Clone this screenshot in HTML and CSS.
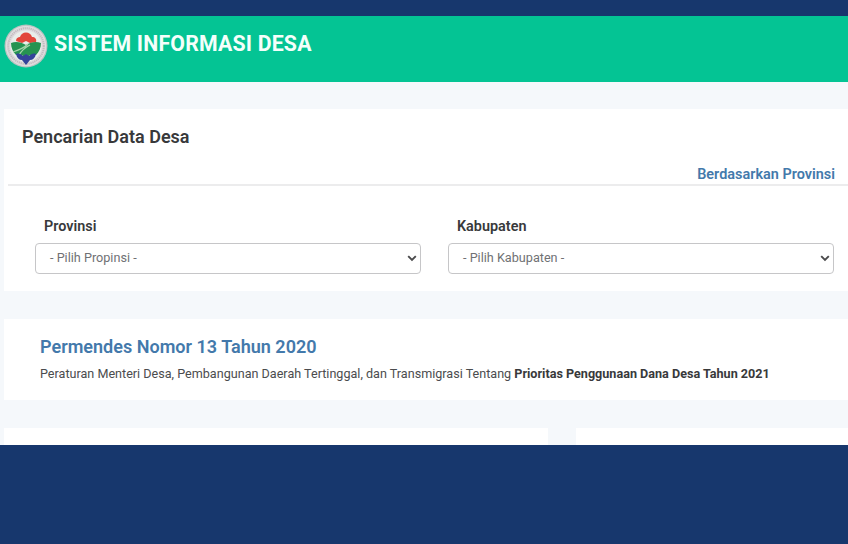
FILE: index.html
```html
<!DOCTYPE html>
<html lang="id">
<head>
<meta charset="utf-8">
<title>Sistem Informasi Desa</title>
<link rel="stylesheet" href="styles.css">
</head>
<body>
<div class="page">
  <header class="header">
    <svg class="logo" viewBox="0 0 44 44" aria-hidden="true">
      <circle cx="22" cy="22" r="21.5" fill="#b9c3c1"/>
      <circle cx="22" cy="22" r="20.300" fill="#dfdcde"/>
      <circle cx="22" cy="22" r="17.800" fill="none" stroke="#a8999f" stroke-width="2" stroke-dasharray="1.200 .8" opacity=".5"/>
      <circle cx="22" cy="22" r="15.500" fill="#e9eeea"/>
      <path d="M12 17c0-3 2-4 4-4 1-3 3-4.500 6-4.500s5 1.500 6 4.500c3 0 5 2 4 5l-6 1-4-2-4 2z" fill="#e2453a"/>
      <path d="M7 19c5-2 10-1 15 2 5-3 10-4 15-2 0 5-2 9-5 12-4-1-7 0-10 3-3-3-6-4-10-3-3-3-5-7-5-12z" fill="#269351"/>
      <path d="M9 28c6-2 11-4 15-8M15 31c3-5 7-8 11-10" fill="none" stroke="#a5d5a9" stroke-width="1.300"/>
      <path d="M12 30c3-1 5 0 7 2l3-2 3 2c2-2 4-3 7-2-1 4-3 6-6 6l-4 5-4-5c-3 0-5-2-6-6z" fill="#34439a"/>
    </svg>
    <h1 class="brand">SISTEM INFORMASI DESA</h1>
  </header>
  <main class="content">
    <section class="card search">
      <h2 class="search-title">Pencarian Data Desa</h2>
      <div class="tabs"><a class="tab">Berdasarkan Provinsi</a></div>
      <div class="fields">
        <div class="field">
          <div class="label">Provinsi</div>
          <div class="select"><span>- Pilih Propinsi -</span>
            <svg class="chevron" viewBox="0 0 10 7"><path d="M1.2 1.2 5 5l3.800-3.800"/></svg>
          </div>
        </div>
        <div class="field">
          <div class="label">Kabupaten</div>
          <div class="select"><span>- Pilih Kabupaten -</span>
            <svg class="chevron" viewBox="0 0 10 7"><path d="M1.2 1.2 5 5l3.800-3.800"/></svg>
          </div>
        </div>
      </div>
    </section>
    <section class="card notice">
      <h3 class="notice-title">Permendes Nomor 13 Tahun 2020</h3>
      <p class="notice-text">Peraturan Menteri Desa, Pembangunan Daerah Tertinggal, dan Transmigrasi Tentang <b>Prioritas Penggunaan Dana Desa Tahun 2021</b></p>
    </section>
    <div class="next-row">
      <section class="card"></section>
      <section class="card"></section>
    </div>
  </main>
</div>
</body>
</html>
```
FILE: styles.css
```css
* { box-sizing: border-box; }
body {
  margin: 0;
  height: 544px;
  padding-top: 16px;
  background: #17376d;
  font-family: Roboto, sans-serif;
  color: #38393b;
  overflow: hidden;
}
h1, h2, h3, p { margin: 0; white-space: nowrap; }
.page { height: 429px; background: #f5f8fb; overflow: hidden; }
.header {
  height: 66px;
  display: flex;
  padding: 8px 0 0 4px;
  background: #04c494;
}
.logo { width: 44px; height: 44px; flex: none; }
.brand {
  margin-left: 6px;
  font-size: 21.3px;
  letter-spacing: 0.18px;
  line-height: 24px;
  padding-top: 8px;
  font-weight: 700;
  color: #f4fffb;
}
.content { padding: 27px 0 0 4px; display: flex; flex-direction: column; gap: 28px; }
.card { background: #fff; }
.search { height: 182px; padding-left: 4px; }
.search-title { padding: 16px 0 0 14px; font-size: 18px; line-height: 24px; font-weight: 600; }
.tabs {
  display: flex;
  justify-content: flex-end;
  height: 37px;
  padding: 16px 13px 0 0;
  border-bottom: 2px solid #ececed;
}
.tab { font-size: 14.45px; line-height: 20px; font-weight: 600; color: #4379ab; }
.fields { display: grid; grid-template-columns: 386px 386px; column-gap: 27px; padding: 31px 0 0 27px; }
.label { height: 26px; padding-left: 9px; font-size: 14.4px; line-height: 20px; font-weight: 600; }
.select {
  display: flex;
  align-items: center;
  justify-content: space-between;
  height: 31px;
  padding: 0 3px 2px 14px;
  border: 1px solid #c6c6c8;
  border-radius: 4px;
  font-size: 12.65px;
  color: #707174;
}
.chevron { width: 10px; height: 7px; margin-top: 2px; fill: none; stroke: #4a4a4c; stroke-width: 1.9; }
.notice { height: 81px; padding: 15px 0 0 36px; }
.notice-title { font-size: 18.05px; line-height: 26px; font-weight: 600; color: #4379ab; }
.notice-text { padding-top: 4px; font-size: 12.6px; line-height: 20px; color: #4b4c4e; }
.notice-text b { font-weight: 700; color: #38393b; }
.next-row { display: grid; grid-template-columns: 544px 1fr; column-gap: 28px; height: 60px; }
```
